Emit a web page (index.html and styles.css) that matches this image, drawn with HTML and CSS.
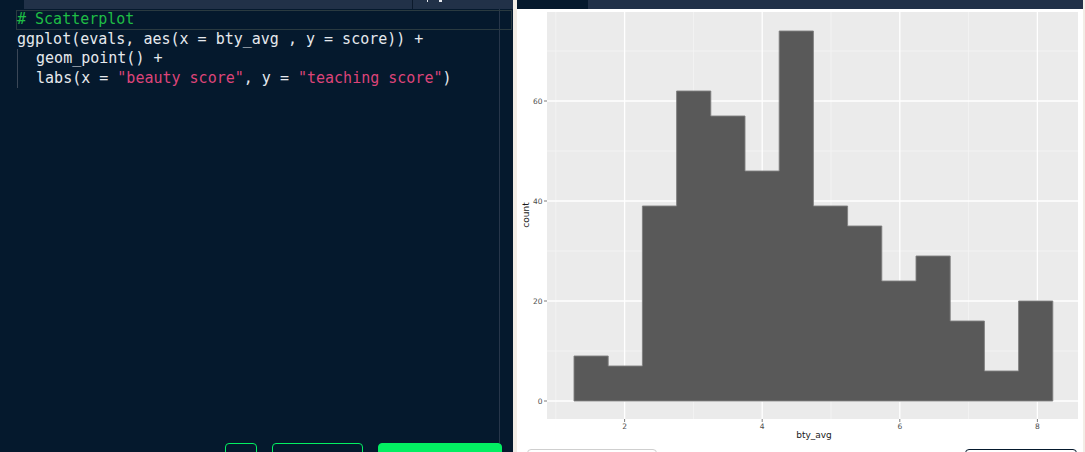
FILE: index.html
```html
<!DOCTYPE html>
<html>
<head>
<meta charset="utf-8">
<title>Plot</title>
<link rel="stylesheet" href="styles.css">
</head>
<body>
<div class="app">
  <section class="editor-pane">
    <div class="tabbar">
      <div class="tab-main"></div>
      <div class="tab-side"><span class="tick t1"></span><span class="tick t2"></span></div>
    </div>
    <div class="editor">
      <div class="margin-line"></div>
      <div class="line active"><span class="cm"># Scatterplot</span></div>
      <div class="line">ggplot(evals, aes(x = bty_avg , y = score)) +</div>
      <div class="block">
        <div class="line">  geom_point() +</div>
        <div class="line">  labs(x = <span class="str">"beauty score"</span>, y = <span class="str">"teaching score"</span>)</div>
      </div>
    </div>
    <div class="actions">
      <button class="btn btn-sm"></button>
      <button class="btn btn-md"></button>
      <button class="btn btn-primary"></button>
    </div>
  </section>
  <div class="split"></div>
  <section class="plot-pane">
    <div class="plot-tabs"><div class="plot-tab-active"></div></div>
    <svg class="plot" width="566" height="436" viewBox="0 0 566 436">
      <rect x="30" y="3" width="531" height="407" fill="#ebebeb"/>
      <g stroke="#f6f6f6" stroke-width="0.7">
        <line x1="38.8" y1="3" x2="38.8" y2="410"/>
        <line x1="176.4" y1="3" x2="176.4" y2="410"/>
        <line x1="314" y1="3" x2="314" y2="410"/>
        <line x1="451.6" y1="3" x2="451.6" y2="410"/>
        <line x1="30" y1="342" x2="561" y2="342"/>
        <line x1="30" y1="242" x2="561" y2="242"/>
        <line x1="30" y1="142" x2="561" y2="142"/>
        <line x1="30" y1="42" x2="561" y2="42"/>
      </g>
      <g stroke="#ffffff" stroke-width="1.3">
        <line x1="107.6" y1="3" x2="107.6" y2="410"/>
        <line x1="245.2" y1="3" x2="245.2" y2="410"/>
        <line x1="382.8" y1="3" x2="382.8" y2="410"/>
        <line x1="520.4" y1="3" x2="520.4" y2="410"/>
        <line x1="30" y1="392" x2="561" y2="392"/>
        <line x1="30" y1="292" x2="561" y2="292"/>
        <line x1="30" y1="192" x2="561" y2="192"/>
        <line x1="30" y1="92" x2="561" y2="92"/>
      </g>
      <path d="M57 392 V347 H91.2 V357 H125.4 V197 H159.6 V82 H193.8 V107 H228 V162 H262.2 V22 H296.4 V197 H330.6 V217 H364.8 V272 H399 V247 H433.2 V312 H467.4 V362 H501.6 V292 H535.8 V392 Z" fill="#595959" stroke="#7f7f7f" stroke-width="0.9"/>
      <g stroke="#444" stroke-width="0.7">
        <line x1="27" y1="392" x2="30" y2="392"/>
        <line x1="27" y1="292" x2="30" y2="292"/>
        <line x1="27" y1="192" x2="30" y2="192"/>
        <line x1="27" y1="92" x2="30" y2="92"/>
        <line x1="107.6" y1="410" x2="107.6" y2="413"/>
        <line x1="245.2" y1="410" x2="245.2" y2="413"/>
        <line x1="382.8" y1="410" x2="382.8" y2="413"/>
        <line x1="520.4" y1="410" x2="520.4" y2="413"/>
      </g>
      <g class="tick-label" text-anchor="end">
        <text x="25.5" y="394.7">0</text>
        <text x="25.5" y="294.7">20</text>
        <text x="25.5" y="194.7">40</text>
        <text x="25.5" y="94.7">60</text>
      </g>
      <g class="tick-label" text-anchor="middle">
        <text x="107.6" y="420">2</text>
        <text x="245.2" y="420">4</text>
        <text x="382.8" y="420">6</text>
        <text x="520.4" y="420">8</text>
      </g>
      <text class="axis-title" x="297" y="429" text-anchor="middle">bty_avg</text>
      <text class="axis-title" x="0" y="0" text-anchor="middle" transform="translate(12 206) rotate(-90)">count</text>
    </svg>
    <div class="plot-actions">
      <button class="pbtn pbtn-light"></button>
      <button class="pbtn pbtn-dark"></button>
    </div>
  </section>
  <div class="edge"></div>
</div>
</body>
</html>
```

FILE: styles.css
```css
* {
  box-sizing: border-box;
}

html, body {
  margin: 0;
  padding: 0;
  background: #f2ede6;
  overflow: hidden;
}

.app {
  display: flex;
  align-items: flex-start;
  width: 1085px;
  height: 452px;
  overflow: hidden;
}

/* ---------- editor pane ---------- */
.editor-pane {
  width: 513px;
  height: 484px;
  flex: none;
  display: flex;
  flex-direction: column;
  background: #05192d;
}

.tabbar {
  height: 9px;
  margin-left: 24px;
  display: flex;
  background: #213148;
  flex: none;
}

.tab-main {
  width: 389px;
  border-right: 1px solid #0c1a2c;
}

.tab-side {
  flex: 1;
  display: flex;
  align-items: flex-start;
}

.tick {
  display: block;
  background: #e6e9ee;
  height: 2px;
}

.t1 {
  width: 1px;
  margin-left: 14px;
}

.t2 {
  width: 3px;
  margin-left: 11px;
}

.editor {
  position: relative;
  flex: 1;
  padding-top: 1px;
  font-family: "DejaVu Sans Mono", "Liberation Mono", monospace;
  font-size: 15px;
  color: #e6e9ee;
}

.margin-line {
  position: absolute;
  left: 499px;
  top: 0;
  bottom: 0;
  width: 1px;
  background: #27364a;
}

.line {
  height: 19.5px;
  line-height: 19.5px;
  padding-left: 17px;
  white-space: pre;
  position: relative;
}

.line.active {
  margin-left: 16px;
  margin-right: 1px;
  padding-left: 0;
  border: 1px solid #2a3a40;
  line-height: 17.5px;
}

.block {
  margin-left: 17px;
  border-left: 1px solid #3b4757;
}

.block .line {
  padding-left: 0;
}

.cm {
  color: #1fbd45;
}

.str {
  color: #dd4479;
}

.actions {
  height: 41px;
  flex: none;
  display: flex;
  justify-content: flex-end;
  align-items: flex-start;
  gap: 15px;
  padding-right: 11px;
}

.btn {
  display: block;
  height: 32px;
  padding: 0;
  border: 1px solid #03ef62;
  border-radius: 4px;
  background: transparent;
}

.btn-sm {
  width: 32px;
}

.btn-md {
  width: 91px;
}

.btn-primary {
  width: 124px;
  background: #03ef62;
}

/* ---------- splitter ---------- */
.split {
  width: 4px;
  height: 452px;
  flex: none;
  background: #f2ede6;
}

.edge {
  width: 2px;
  height: 452px;
  flex: none;
  background: #f2ede6;
}

/* ---------- plot pane ---------- */
.plot-pane {
  width: 566px;
  height: 484px;
  flex: none;
  display: flex;
  flex-direction: column;
  background: #ffffff;
}

.plot-tabs {
  height: 9px;
  flex: none;
  display: flex;
  background: #213148;
}

.plot-tab-active {
  width: 71px;
  background: #05192d;
}

.plot {
  display: block;
  flex: none;
}

.tick-label {
  font-family: "DejaVu Sans", "Liberation Sans", sans-serif;
  font-size: 7.5px;
  fill: #4d4d4d;
}

.axis-title {
  font-family: "DejaVu Sans", "Liberation Sans", sans-serif;
  font-size: 9px;
  fill: #1a1a1a;
}

.plot-actions {
  display: flex;
  justify-content: space-between;
  padding: 4px 6px 0 10px;
}

.pbtn {
  display: block;
  height: 32px;
  padding: 0;
  border-radius: 4px;
  background: #ffffff;
}

.pbtn-light {
  width: 130px;
  border: 1px solid #cfcfcf;
}

.pbtn-dark {
  width: 112px;
  border: 1.5px solid #05192d;
}
```
